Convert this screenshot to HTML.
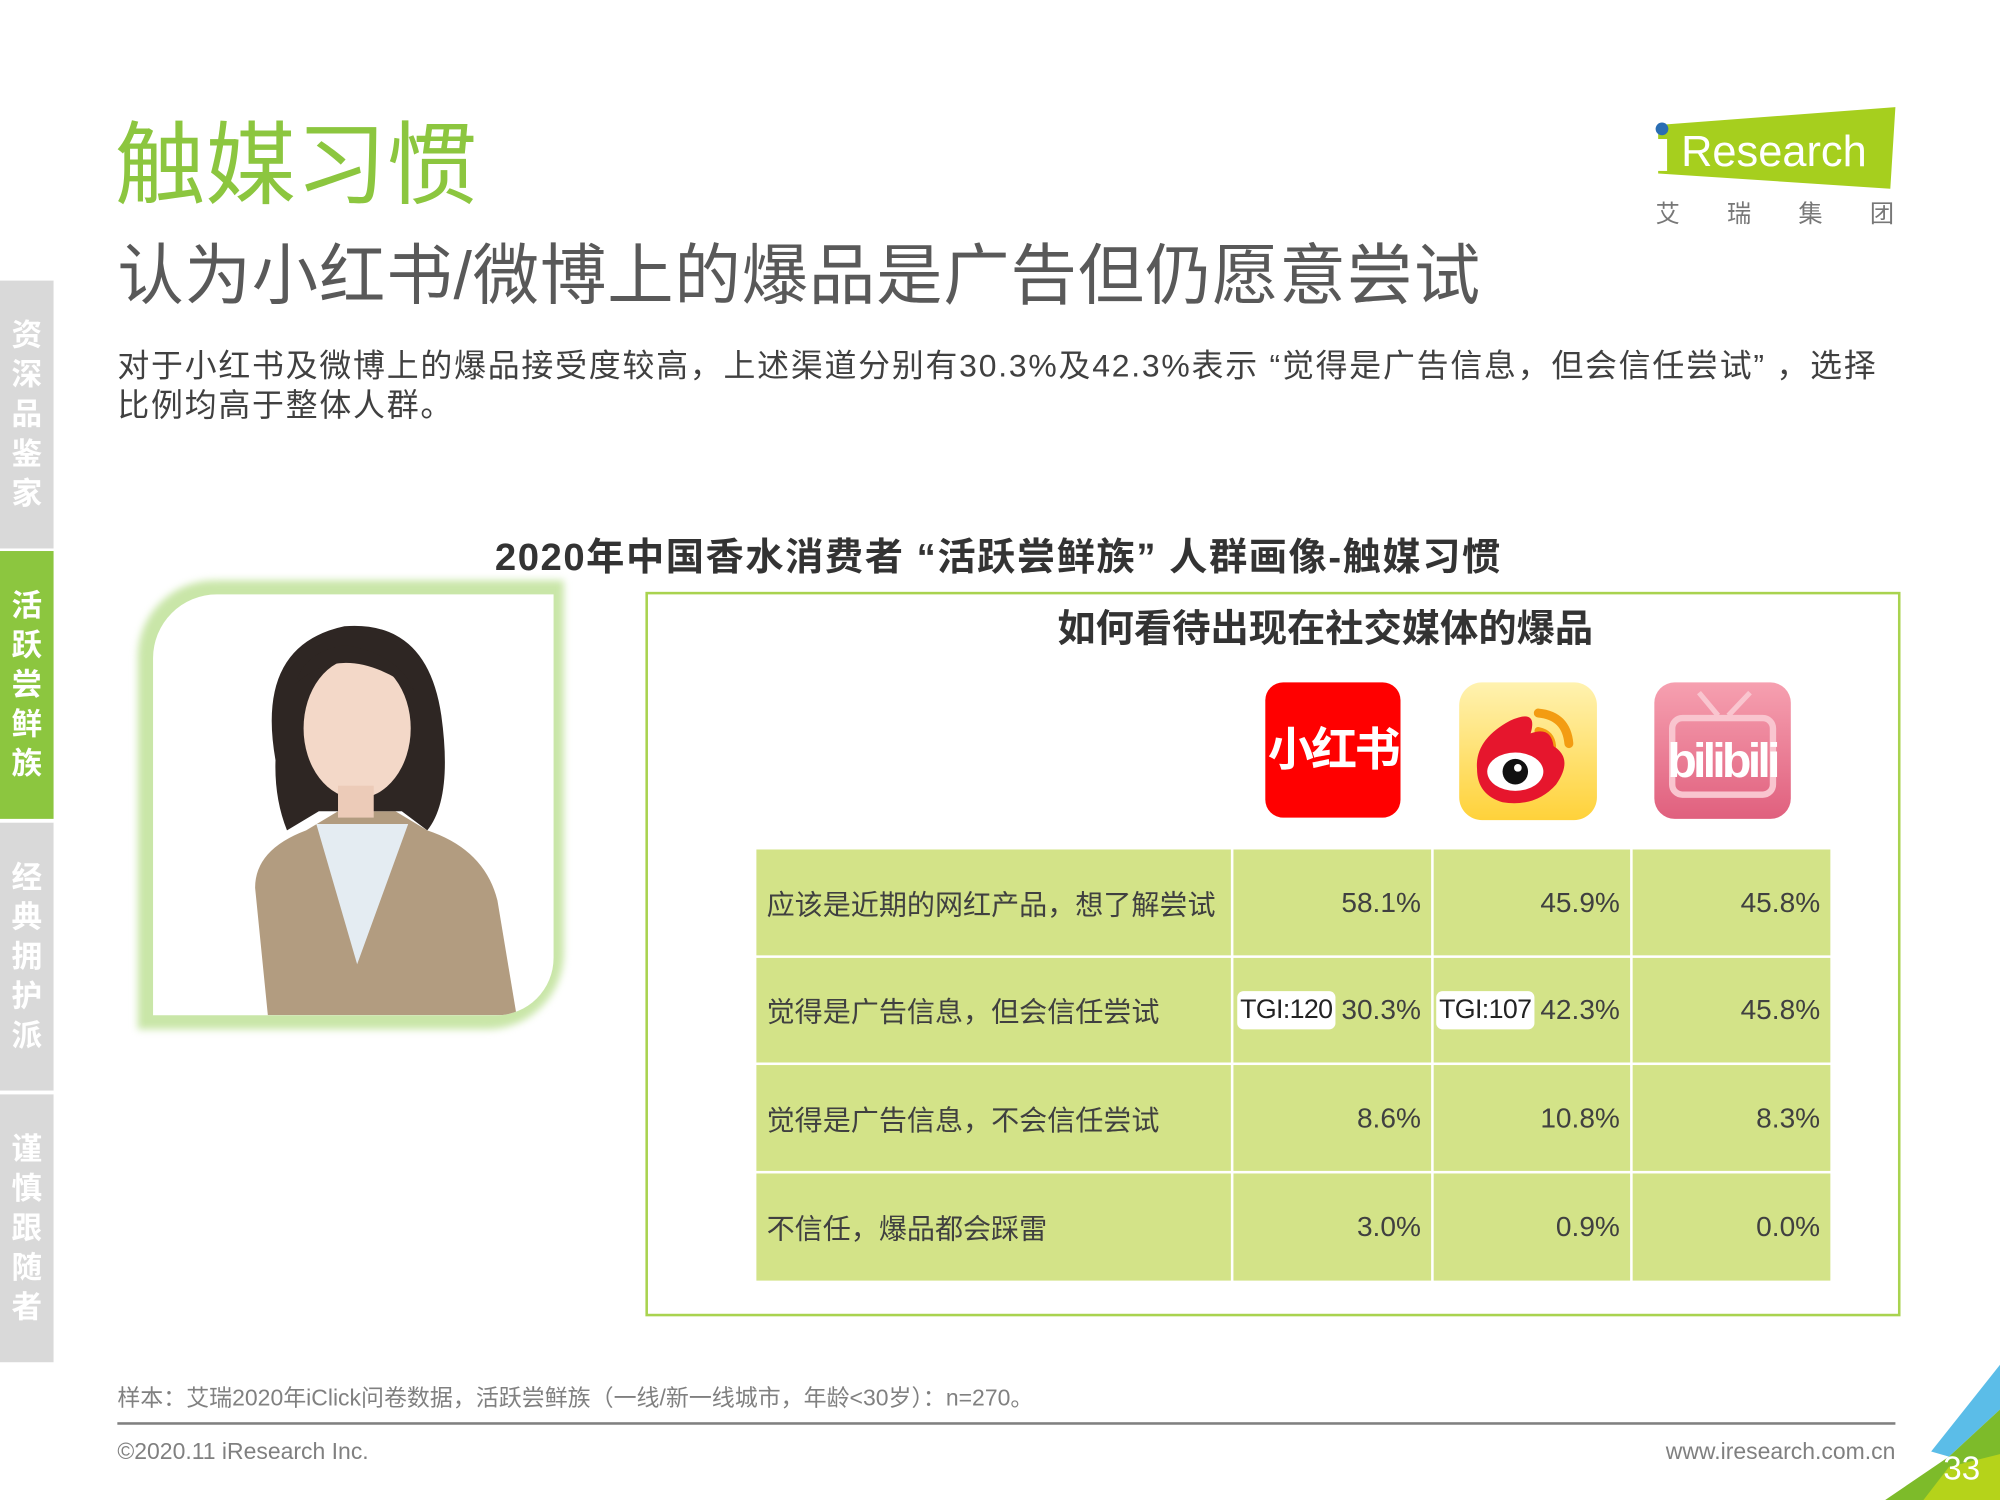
<!DOCTYPE html>
<html><head><meta charset="utf-8"><style>
html,body{margin:0;padding:0;background:#fff;width:2000px;height:1500px;overflow:hidden}
#s{position:absolute;left:0;top:0;width:1568px;height:1176px;transform:scale(1.27551);transform-origin:0 0;font-family:"Liberation Sans","Noto Sans CJK SC",sans-serif;color:#404040}
.a{position:absolute;white-space:nowrap}
.side{position:absolute;left:0;width:42px;background:#d9d9d9;color:#fff;font-weight:bold;font-size:24px;line-height:31px;text-align:center;display:flex;flex-direction:column;justify-content:center}
.side.g{background:#8cc63f}
.cell{position:absolute;background:#d3e388;font-size:22px;color:#404040;display:flex;align-items:center}
.r{justify-content:flex-end;padding-right:8px;box-sizing:border-box}
.tgi{background:#fff;border-radius:5px;padding:0 2px;margin-right:5px;line-height:30px;color:#222;font-size:21px;letter-spacing:-0.5px}
</style></head><body><div id="s">
<div class="a" style="left:90px;top:86px;font-size:71px;color:#8cc63f;line-height:90px">触媒习惯</div>
<div class="a" style="left:92px;top:184px;font-size:52px;color:#595959;line-height:66px;letter-spacing:0.7px">认为小红书/微博上的爆品是广告但仍愿意尝试</div>
<div class="a" style="left:92px;top:272px;font-size:25px;line-height:31px;color:#404040;letter-spacing:1.4px">对于小红书及微博上的爆品接受度较高，上述渠道分别有30.3%及42.3%表示 “觉得是广告信息，但会信任尝试” ，选择<br>比例均高于整体人群。</div>

<svg class="a" style="left:1294px;top:82px" width="196" height="100">
<polygon points="6,16 192,2 188,66 6,54" fill="#a6cf1e"/>
<circle cx="9" cy="19" r="5" fill="#2a6db3"/>
<rect x="5" y="27" width="8" height="25" fill="#fff"/>
<text x="24" y="48" font-family="Liberation Sans" font-size="34" fill="#fff">Research</text>
<text x="4" y="92" font-family="Liberation Sans,Noto Sans CJK SC" font-size="19" fill="#777" letter-spacing="37">艾瑞集团</text>
</svg>

<div class="side" style="top:220px;height:210px">资<br>深<br>品<br>鉴<br>家</div>
<div class="side g" style="top:432px;height:210px">活<br>跃<br>尝<br>鲜<br>族</div>
<div class="side" style="top:645px;height:210px">经<br>典<br>拥<br>护<br>派</div>
<div class="side" style="top:858px;height:210px">谨<br>慎<br>跟<br>随<br>者</div>

<div class="a" style="left:388px;top:418px;font-size:30px;font-weight:bold;color:#333;line-height:40px;letter-spacing:1.2px">2020年中国香水消费者 “活跃尝鲜族” 人群画像-触媒习惯</div>

<div class="a" style="left:108px;top:455px;width:334px;height:352px;border-radius:60px 0 60px 0;background:#c9e6a8;filter:blur(3px)"></div>
<div class="a" style="left:120px;top:466px;width:314px;height:330px;border-radius:50px 0 45px 0;background:#fff;overflow:hidden">
<svg width="314" height="330">
<path d="M90 330 L80 230 Q80 200 120 185 L145 170 L190 170 L215 185 Q260 200 270 240 L285 330Z" fill="#b29c80"/>
<path d="M128 180 L160 290 L200 180Z" fill="#e4ecf2"/>
<path d="M96 130 Q80 40 150 25 Q215 20 226 95 Q235 160 215 185 L195 170 L130 170 L105 185 Q95 160 96 130Z" fill="#2e2623"/>
<ellipse cx="160" cy="105" rx="42" ry="55" fill="#f3d8c8"/>
<rect x="145" y="150" width="28" height="25" fill="#eccbb8"/>
<path d="M112 70 Q150 35 205 75 Q190 45 150 40 Q118 45 112 70Z" fill="#2e2623"/>
</svg></div>

<div class="a" style="left:506px;top:464px;width:980px;height:564px;border:2px solid #a9d34f"></div>
<div class="a" style="left:829px;top:474px;font-size:30px;font-weight:bold;color:#333;line-height:40px">如何看待出现在社交媒体的爆品</div>

<div class="a" style="left:992px;top:535px;width:106px;height:106px;border-radius:14px;background:#ff0000;color:#fff;font-weight:bold;font-size:36px;line-height:106px;text-align:center;letter-spacing:-2px">小红书</div>
<div class="a" style="left:1144px;top:535px;width:108px;height:108px;border-radius:18px;background:linear-gradient(#fff2b0,#ffd23a)">
<svg width="108" height="108"><path d="M62 24 Q84 26 86 48" stroke="#f39c12" stroke-width="7" fill="none" stroke-linecap="round"/><path d="M62 38 Q72 40 73 50" stroke="#f39c12" stroke-width="6" fill="none" stroke-linecap="round"/><path d="M14 68 Q12 45 40 30 Q62 20 56 40 Q72 34 74 50 Q90 60 76 80 Q60 98 34 94 Q14 88 14 68Z" fill="#e6162d"/><ellipse cx="44" cy="70" rx="22" ry="15" fill="#fff"/><circle cx="44" cy="70" r="10" fill="#111"/><circle cx="46" cy="67" r="3" fill="#fff"/></svg></div>
<div class="a" style="left:1297px;top:535px;width:107px;height:107px;border-radius:16px;background:linear-gradient(#f6a0b0,#e0607e)">
<svg width="107" height="107"><rect x="14" y="28" width="79" height="60" rx="8" fill="none" stroke="#f9c5cf" stroke-width="5"/><path d="M35 8 L50 26 M75 8 L58 26" stroke="#f9c5cf" stroke-width="4"/><text x="53" y="74" text-anchor="middle" font-family="Liberation Sans" font-weight="bold" font-size="38" fill="#fff" letter-spacing="-3">bilibili</text></svg></div>

<div class="cell" style="left:593px;top:666px;width:372px;height:83px;padding-left:8px;box-sizing:border-box">应该是近期的网红产品，想了解尝试</div>
<div class="cell r" style="left:967px;top:666px;width:155px;height:83px">58.1%</div>
<div class="cell r" style="left:1124px;top:666px;width:154px;height:83px">45.9%</div>
<div class="cell r" style="left:1280px;top:666px;width:155px;height:83px">45.8%</div>

<div class="cell" style="left:593px;top:751px;width:372px;height:82px;padding-left:8px;box-sizing:border-box">觉得是广告信息，但会信任尝试</div>
<div class="cell r" style="left:967px;top:751px;width:155px;height:82px"><span class="tgi">TGI:120</span>30.3%</div>
<div class="cell r" style="left:1124px;top:751px;width:154px;height:82px"><span class="tgi">TGI:107</span>42.3%</div>
<div class="cell r" style="left:1280px;top:751px;width:155px;height:82px">45.8%</div>

<div class="cell" style="left:593px;top:835px;width:372px;height:83px;padding-left:8px;box-sizing:border-box">觉得是广告信息，不会信任尝试</div>
<div class="cell r" style="left:967px;top:835px;width:155px;height:83px">8.6%</div>
<div class="cell r" style="left:1124px;top:835px;width:154px;height:83px">10.8%</div>
<div class="cell r" style="left:1280px;top:835px;width:155px;height:83px">8.3%</div>

<div class="cell" style="left:593px;top:920px;width:372px;height:84px;padding-left:8px;box-sizing:border-box">不信任，爆品都会踩雷</div>
<div class="cell r" style="left:967px;top:920px;width:155px;height:84px">3.0%</div>
<div class="cell r" style="left:1124px;top:920px;width:154px;height:84px">0.9%</div>
<div class="cell r" style="left:1280px;top:920px;width:155px;height:84px">0.0%</div>

<div class="a" style="left:92px;top:1084px;font-size:18px;color:#808080;line-height:24px">样本：艾瑞2020年iClick问卷数据，活跃尝鲜族（一线/新一线城市，年龄&lt;30岁）：n=270。</div>
<div class="a" style="left:92px;top:1115px;width:1394px;height:2px;background:#808080"></div>
<div class="a" style="left:92px;top:1126px;font-size:18px;color:#808080;line-height:24px">©2020.11 iResearch Inc.</div>
<div class="a" style="right:82px;top:1126px;font-size:18px;color:#808080;line-height:24px">www.iresearch.com.cn</div>

<svg class="a" style="left:1468px;top:1060px" width="100" height="116">
<polygon points="100,10 100,45 60,82 46,78" fill="#5bbde8"/>
<polygon points="100,45 100,116 10,116 60,82" fill="#7dbb2a"/>
<polygon points="40,116 100,116 100,80 60,90" fill="#b5d31a"/>
<text x="70" y="100" text-anchor="middle" font-family="Liberation Sans" font-size="26" fill="#fff">33</text>
</svg>
</div></body></html>
